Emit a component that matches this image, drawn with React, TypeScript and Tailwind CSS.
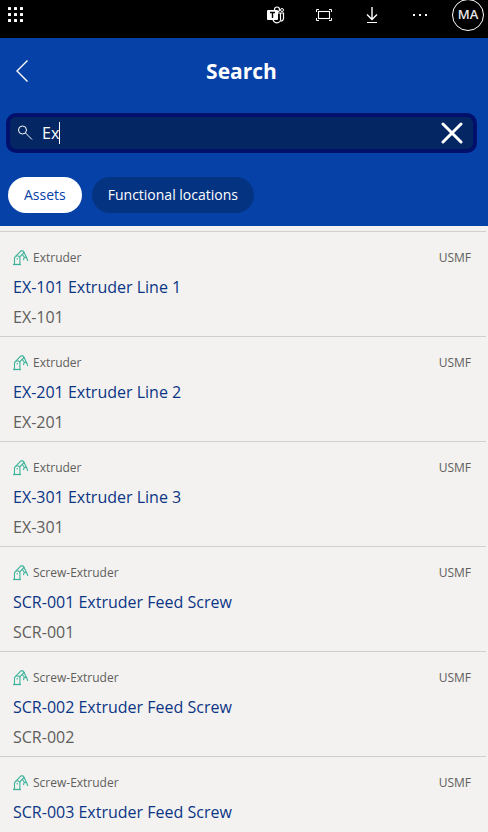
import { useState } from 'react';

type Asset = {
  id: string;
  name: string;
  type: string;
  company: string;
};

const assets: Asset[] = [
  { id: 'EX-101', name: 'EX-101 Extruder Line 1', type: 'Extruder', company: 'USMF' },
  { id: 'EX-201', name: 'EX-201 Extruder Line 2', type: 'Extruder', company: 'USMF' },
  { id: 'EX-301', name: 'EX-301 Extruder Line 3', type: 'Extruder', company: 'USMF' },
  { id: 'SCR-001', name: 'SCR-001 Extruder Feed Screw', type: 'Screw-Extruder', company: 'USMF' },
  { id: 'SCR-002', name: 'SCR-002 Extruder Feed Screw', type: 'Screw-Extruder', company: 'USMF' },
  { id: 'SCR-003', name: 'SCR-003 Extruder Feed Screw', type: 'Screw-Extruder', company: 'USMF' },
];

function WaffleIcon() {
  const steps = [0, 6, 12];
  return (
    <svg className="w-4 h-4" viewBox="0 0 16 16" fill="white">
      {steps.map((y) =>
        steps.map((x) => <rect key={`${x}-${y}`} x={x} y={y} width="3" height="3" rx="0.6" />)
      )}
    </svg>
  );
}

function TeamsIcon() {
  return (
    <svg className="w-[18px] h-[18px]" viewBox="0 0 18 18" fill="none" stroke="white">
      <circle cx="10" cy="3.5" r="2.5" strokeWidth="1.2" />
      <circle cx="15" cy="4" r="1.5" />
      <path d="M11 7h5.5v5.5a2.6 2.6 0 0 1-3 2.5" strokeWidth="1.2" />
      <path d="M13.5 7v5a3.8 3.8 0 0 1-7.4 2" strokeWidth="1.2" />
      <rect x="0" y="4" width="11" height="10" rx="1" fill="white" stroke="none" />
      <path d="M3 6.5h5M5.5 6.5V12" stroke="black" strokeWidth="1.4" />
    </svg>
  );
}

function FullscreenIcon() {
  return (
    <svg className="w-[18px] h-[14px]" viewBox="0 0 18 14" fill="none" stroke="white">
      <rect x="3.5" y="3.5" width="11" height="7" strokeWidth="1.1" />
      <path d="M1.5 4V1.5H4M14 1.5h2.5V4M16.5 10v2.5H14M4 12.5H1.5V10" />
    </svg>
  );
}

function DownloadIcon() {
  return (
    <svg className="w-[14px] h-[18px]" viewBox="0 0 14 18" fill="none" stroke="white">
      <path d="M7 1v12M2 8.5l5 5 5-5" strokeWidth="1.4" />
      <path d="M2 16.5h10" />
    </svg>
  );
}

function MachineIcon() {
  return (
    <svg className="w-4 h-4 shrink-0" viewBox="0 0 16 16" fill="none" stroke="#3fb39b" strokeWidth="1.1">
      <path d="M0 14.5h8" strokeWidth="1.3" />
      <path d="M1.5 14.5V7.8L3 6h2.6l1.3 1.8v6.7" />
      <path d="M2.8 6.2L8 .9h1.9l1.2 1.6L6.6 7" />
      <path d="M10.8 2l3 6 1 3M9.200 4.200l2 2.800-.7 3.200M11.200 7l2.400 1" />
      <path d="M4.200 8v1.500" />
    </svg>
  );
}

function AssetRow({ asset }: { asset: Asset }) {
  return (
    <li className="h-[105px] border-t border-[#d0cfce] pl-[13px] pr-[15px] pt-4">
      <div className="flex items-center justify-between h-5 text-xs text-[#605e5c]">
        <span className="flex items-center gap-1">
          <MachineIcon />
          {asset.type}
        </span>
        <span>{asset.company}</span>
      </div>
      <a href={`#${asset.id}`} className="block mt-1 leading-[30px] text-[#0b3585]">
        {asset.name}
      </a>
      <p className="leading-[30px] text-[#605e5c]">{asset.id}</p>
    </li>
  );
}

export default function App() {
  const [query, setQuery] = useState('Ex');

  return (
    <div className="min-h-screen bg-[#f3f2f0] font-['Open_Sans','Noto_Sans',sans-serif] text-base">
      {/* App bar */}
      <div className="h-[38px] bg-black flex items-center justify-between pl-2 pr-1 pb-2">
        <button aria-label="App launcher">
          <WaffleIcon />
        </button>
        <div className="flex items-center">
          <button aria-label="Teams" className="w-12 flex justify-center">
            <TeamsIcon />
          </button>
          <button aria-label="Full screen" className="w-12 flex justify-center">
            <FullscreenIcon />
          </button>
          <button aria-label="Download" className="w-12 flex justify-center">
            <DownloadIcon />
          </button>
          <button aria-label="More" className="w-12 flex justify-center">
            <svg className="w-4 h-4" viewBox="0 0 16 16" fill="white">
              <rect x="1" y="7" width="2" height="2" />
              <rect x="7" y="7" width="2" height="2" />
              <rect x="13" y="7" width="2" height="2" />
            </svg>
          </button>
          <button
            aria-label="Account"
            className="size-8 ml-2 rounded-full border border-white text-[#e6e6e6] text-[13px] font-semibold"
          >
            MA
          </button>
        </div>
      </div>

      {/* Search header */}
      <header className="bg-[#0641a8] pb-[13px]">
        <div className="grid grid-cols-[1fr_auto_1fr] items-center h-[75px] pl-[15px] pr-5 pb-2">
          <button aria-label="Back" className="w-4">
            <svg className="w-4 h-6" viewBox="0 0 16 24" fill="none" stroke="white" strokeWidth="1.4">
              <path d="M12.5 .5L2 11l10.5 10.5" />
            </svg>
          </button>
          <h1 className="text-[21px] font-bold text-white">Search</h1>
        </div>

        <label className="flex items-center h-10 ml-[6px] mr-[11px] px-2 rounded-[10px] border-4 border-[#00106b] bg-[#042764]">
          <svg className="w-4 h-4 shrink-0" viewBox="0 0 16 16" fill="none" stroke="white">
            <circle cx="4.5" cy="5" r="4" />
            <path d="M7.5 8L14 14.5" />
          </svg>
          <div className="relative flex-1 min-w-0 ml-2">
            <input
              aria-label="Search"
              value={query}
              onChange={(e) => setQuery(e.target.value)}
              className="block w-full h-6 bg-transparent text-white caret-transparent outline-none"
            />
            {/* Caret, placed after a hidden copy of the query */}
            <div className="absolute inset-y-0 left-0 flex items-center pointer-events-none" aria-hidden="true">
              <span className="invisible whitespace-pre">{query}</span>
              <span className="w-px h-[22px] bg-white" />
            </div>
          </div>
          <button aria-label="Clear search" onClick={() => setQuery('')}>
            <svg className="w-6 h-6" viewBox="0 0 24 24" fill="none" stroke="white" strokeWidth="3" strokeLinecap="round">
              <path d="M2 3l18 18M20 3L2 21" />
            </svg>
          </button>
        </label>

        <div className="flex gap-[10px] mt-6 pl-2 text-sm">
          <button className="h-9 px-4 rounded-full bg-white text-[#0641a8]">Assets</button>
          <button className="h-9 px-4 rounded-full bg-[#043382] text-white">
            Functional locations
          </button>
        </div>
      </header>

      {/* Results */}
      <ul className="pt-[5px] pr-[2px]">
        {assets.map((asset) => (
          <AssetRow key={asset.id} asset={asset} />
        ))}
      </ul>
    </div>
  );
}
